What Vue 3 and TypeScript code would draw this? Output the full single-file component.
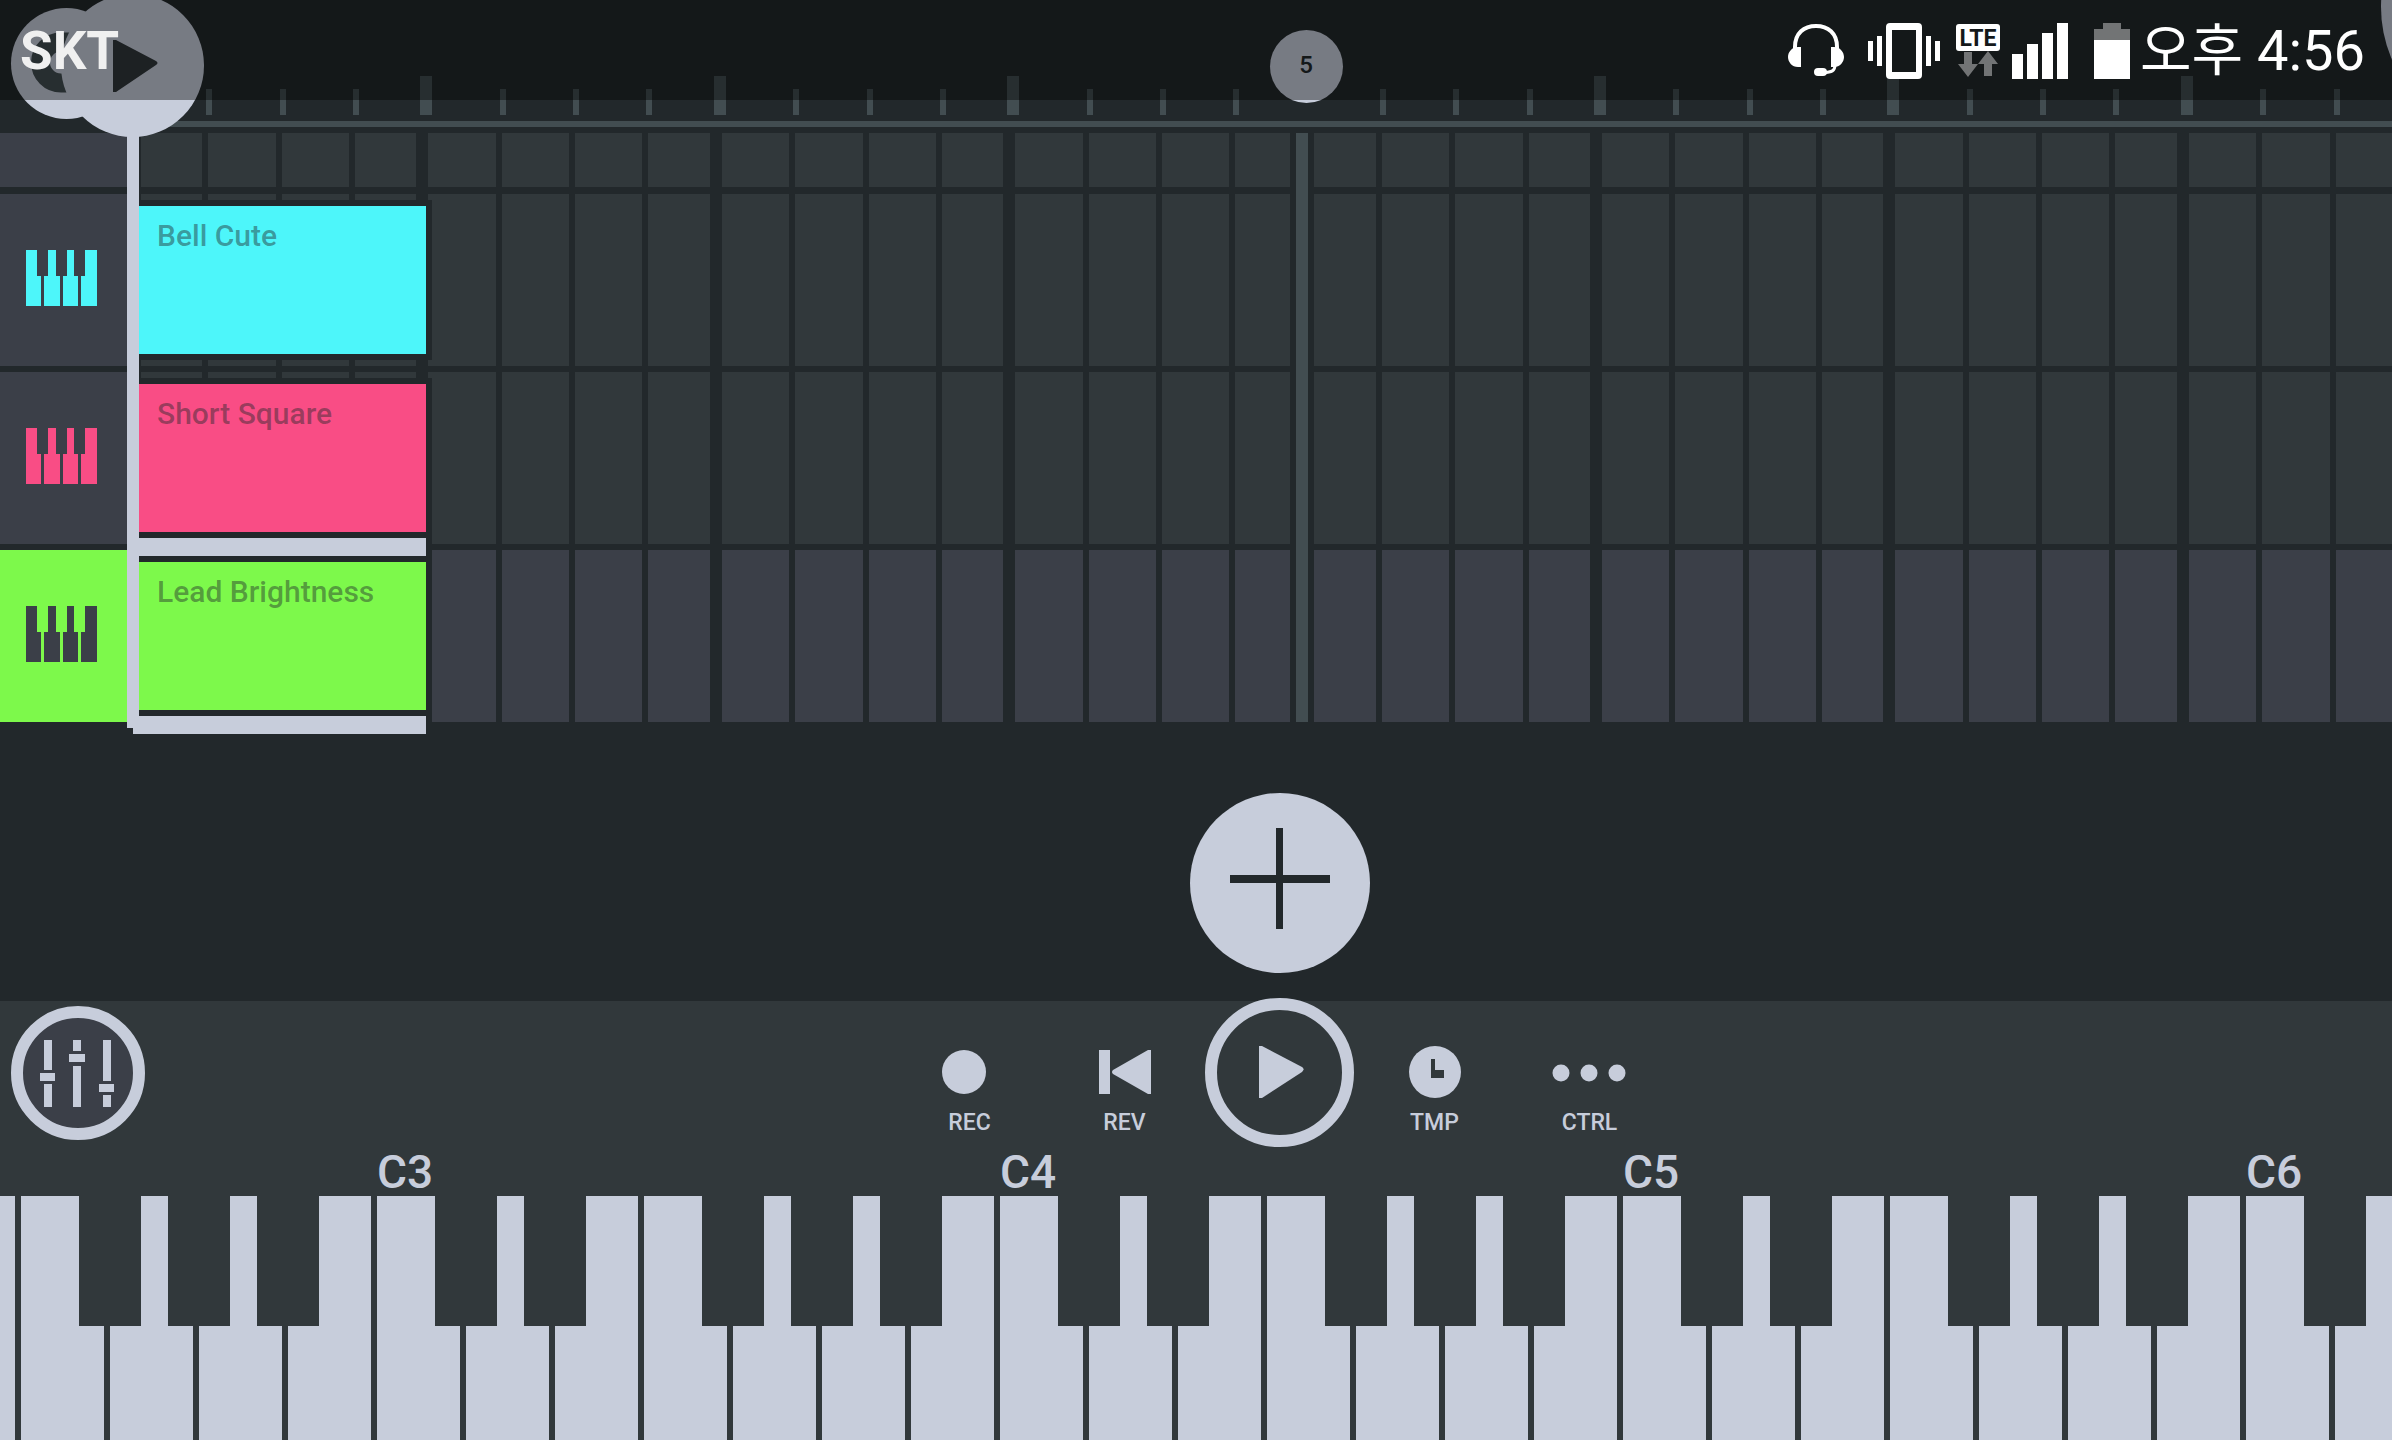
<script setup lang="ts">
interface Track {
  name: string
  color: string
  selected: boolean
}

const tracks: Track[] = [
  { name: 'Bell Cute', color: '#4df6fa', selected: false },
  { name: 'Short Square', color: '#f94d85', selected: false },
  { name: 'Lead Brightness', color: '#7df94b', selected: true },
]

const bars = [0, 1, 2, 3, 4, 5, 6, 7]
const beats = [0, 1, 2, 3]
const markerBar = 4

// White keys run from the E below the first full F upwards.
const scale = ['E', 'F', 'G', 'A', 'B', 'C', 'D']
const keys = Array.from({ length: 42 }, (_, i) => {
  const note = scale[i % 7]
  return { id: i, note, sharp: note !== 'E' && note !== 'B' }
})
const octaves = ['C3', 'C4', 'C5', 'C6']
</script>

<template>
  <div class="app">
    <header class="status">
      <span class="carrier">SKT</span>
      <div class="indicators">
        <svg width="70" height="56" viewBox="0 0 70 56" aria-hidden="true">
          <path d="M7 29V24C7 10 16 3 28 3s21 7 21 21v5" fill="none" stroke="#fff" stroke-width="4" />
          <path d="M13 24v20h-3C4 44 0 39 0 34s4-10 10-10zM43 24v20h3c6 0 10-5 10-10s-4-10-10-10z" fill="#fff" />
          <path d="M47 42c0 6-3 7-12 8" fill="none" stroke="#fff" stroke-width="3" />
          <rect x="26" y="45" width="13" height="8" rx="4" fill="#fff" />
        </svg>
        <svg width="78" height="56" viewBox="0 0 78 56" aria-hidden="true">
          <path fill="#fff" fill-rule="evenodd" d="M22 0h28q4 0 4 4v48q0 4-4 4H22q-4 0-4-4V4q0-4 4-4zM24 7v42h24V7z" />
          <path fill="#fff" d="M0 18h5v20H0zM9 13h5v30H9zM58 13h5v30h-5zM67 18h5v20h-5z" />
        </svg>
        <svg width="46" height="56" viewBox="0 0 46 56" aria-label="LTE">
          <rect y="1" width="44" height="27" rx="3" fill="#fff" />
          <text x="22" y="23" text-anchor="middle" class="lte">LTE</text>
          <path fill="#727475" d="M8 29h8v12h6L12 54 2 41h6zM28 53V41h-6l10-13 10 13h-6v12z" />
        </svg>
        <svg width="72" height="56" viewBox="0 0 72 56" aria-hidden="true">
          <path fill="#fff" d="M0 31h11v25H0zM15 21h11v35H15zM30 10h11v46H30zM45 0h11v56H45z" />
        </svg>
        <svg width="36" height="56" viewBox="0 0 36 56" aria-hidden="true">
          <path fill="#727475" d="M9 0h18v6h9v11H0V6h9z" />
          <path fill="#fff" d="M0 17h36v39H0z" />
        </svg>
        <time class="clock">오후 4:56</time>
      </div>
    </header>

    <main class="timeline">
      <div class="ruler">
        <div class="ticks">
          <div v-for="bar in bars" :key="bar" class="tick-bar">
            <span
              v-for="beat in beats"
              :key="beat"
              class="tick"
              :class="{ major: beat === 0, hidden: beat === 0 && bar % markerBar === 0 }"
            ></span>
          </div>
        </div>
      </div>

      <div class="row short">
        <div class="head"></div>
        <div class="lane">
          <div class="cells">
            <div v-for="bar in bars" :key="bar" class="bar">
              <span v-for="beat in beats" :key="beat" class="beat"></span>
            </div>
          </div>
        </div>
      </div>

      <div
        v-for="track in tracks"
        :key="track.name"
        class="row"
        :class="{ selected: track.selected }"
        :style="{ '--track': track.color }"
      >
        <button class="head" type="button" :aria-label="track.name">
          <svg width="71" height="56" viewBox="0 0 71 56" aria-hidden="true">
            <path
              fill="currentColor"
              d="M0 0h11v26h4v30H0zM22 0h8v26h4v30H18V26h4zM41 0h7v26h4v30H37V26h4zM59 0h12v56H55V26h4z"
            />
          </svg>
        </button>
        <div class="lane">
          <div class="cells">
            <div v-for="bar in bars" :key="bar" class="bar">
              <span v-for="beat in beats" :key="beat" class="beat"></span>
            </div>
          </div>
          <button class="clip" type="button"><span>{{ track.name }}</span></button>
        </div>
      </div>

      <div class="overlay">
        <div class="loop-line"></div>
        <div class="loop-flag">5</div>
      </div>
      <div class="playhead"></div>
      <button class="knob undo" type="button" aria-label="Undo">
        <svg width="111" height="111" viewBox="0 0 111 111" aria-hidden="true">
          <path d="M68 34H50a20 20 0 0 0 0 41h18" fill="none" stroke="#424d51" stroke-width="19" />
        </svg>
      </button>
      <button class="knob start" type="button" aria-label="Song position">
        <svg width="143" height="143" viewBox="0 0 143 143" aria-hidden="true">
          <path d="M52 46h3l40 21q3 2 0 4L55 98h-3z" fill="#31383b" />
        </svg>
      </button>
      <button class="knob menu" type="button" aria-label="Menu"></button>
    </main>

    <section class="add-area">
      <button class="add" type="button" aria-label="Add track">
        <svg width="180" height="180" viewBox="0 0 180 180" aria-hidden="true">
          <path fill="#22282b" d="M86 35h7v47h47v8H93v46h-7V90H40v-8h46z" />
        </svg>
      </button>
    </section>

    <section class="panel">
      <div class="toolbar">
        <button class="mixer" type="button" aria-label="Mixer">
          <svg width="110" height="110" viewBox="12 12 110 110" aria-hidden="true">
            <path
              fill="#c7cddb"
              d="M33 34h8v30h-8zM29 67h15v8H29zM33 78h8v23h-8zM62 34h8v11h-8zM58 48h16v8H58zM62 60h8v41h-8zM92 34h8v41h-8zM88 78h15v8H88zM92 89h8v12h-8z"
            />
          </svg>
        </button>
        <div class="transport">
          <button class="tool" type="button">
            <svg width="120" height="60" viewBox="0 0 120 60" aria-hidden="true">
              <circle cx="54" cy="29" r="22" />
            </svg>
            <span>REC</span>
          </button>
          <button class="tool" type="button">
            <svg width="120" height="60" viewBox="0 0 120 60" aria-hidden="true">
              <path d="M34 7h11v44H34zM86 7v44h-3L48 31q-2-2 0-4L83 7z" />
            </svg>
            <span>REV</span>
          </button>
          <button class="play" type="button" aria-label="Play">
            <svg width="125" height="125" viewBox="12 12 125 125" aria-hidden="true">
              <path d="M54 48h3l40 21q3 2 0 5l-40 26h-3z" />
            </svg>
          </button>
          <button class="tool" type="button">
            <svg width="120" height="60" viewBox="0 0 120 60" aria-hidden="true">
              <circle cx="60" cy="29" r="26" />
              <path d="M56 16h4v11h9v8H56z" fill="#31383b" />
            </svg>
            <span>TMP</span>
          </button>
          <button class="tool" type="button">
            <svg width="120" height="60" viewBox="0 0 120 60" aria-hidden="true">
              <circle cx="31" cy="30" r="8.5" />
              <circle cx="59" cy="30" r="8.5" />
              <circle cx="87" cy="30" r="8.5" />
            </svg>
            <span>CTRL</span>
          </button>
        </div>
      </div>
      <div class="octaves">
        <span v-for="octave in octaves" :key="octave">{{ octave }}</span>
      </div>
      <div class="keyboard">
        <div v-for="key in keys" :key="key.id" class="key">
          <button class="white" type="button" :aria-label="key.note"></button>
          <button v-if="key.sharp" class="black" type="button" :aria-label="key.note + ' sharp'"></button>
        </div>
      </div>
    </section>
  </div>
</template>

<style>
body {
  margin: 0;
  background: #22282b;
}
</style>

<style scoped>
.app {
  --bg: #22282b;
  --cell: #31383b;
  --slot: #3b3f48;
  --line: #424d51;
  --light: #c7cddb;
  position: relative;
  display: flex;
  flex-direction: column;
  min-height: 100vh;
  overflow: hidden;
  background: var(--bg);
  font-family: Roboto, "Noto Sans CJK KR", sans-serif;
}

button {
  padding: 0;
  border: 0;
  background: none;
  color: inherit;
  font: inherit;
  cursor: pointer;
}

svg {
  display: block;
}

.status {
  position: absolute;
  top: 0;
  left: 0;
  right: 0;
  z-index: 5;
  display: flex;
  justify-content: space-between;
  align-items: center;
  box-sizing: border-box;
  height: 100px;
  padding: 2px 27px 0 20px;
  background: rgba(0, 0, 0, 0.4);
}

.carrier {
  color: #f0f0f0;
  font-size: 53px;
  font-weight: 700;
  line-height: 64px;
}

.indicators {
  display: flex;
  align-items: center;
  gap: 10px;
}

.lte {
  fill: #14181a;
  font-size: 23px;
  font-weight: 700;
}

.clock {
  color: #fff;
  font-size: 56px;
  line-height: 64px;
}

.timeline {
  position: relative;
}

.ruler {
  height: 133px;
  margin-left: 127px;
  overflow: hidden;
}

.ticks {
  display: flex;
  height: 115px;
  margin-bottom: 6px;
  padding-left: 8px;
}

.ruler::after {
  content: "";
  display: block;
  height: 6px;
  background: var(--line);
}

.tick-bar,
.bar {
  flex: 0 0 13%;
  display: grid;
  grid-template-columns: repeat(4, 1fr);
}

.tick-bar {
  align-items: end;
}

.tick {
  width: 6px;
  height: 26px;
  margin-left: -2px;
  background: var(--line);
}

.tick.major {
  width: 12px;
  height: 39px;
  margin-left: -8px;
}

.tick.hidden {
  visibility: hidden;
}

.row {
  display: flex;
  height: 172px;
  margin-bottom: 6px;
}

.row.short {
  height: 54px;
  margin-bottom: 7px;
}

.row:nth-child(5) {
  margin-bottom: 0;
}

.head {
  display: flex;
  align-items: center;
  justify-content: center;
  flex: 0 0 127px;
  box-sizing: border-box;
  padding: 0 4px 4px 0;
  background: var(--slot);
  color: var(--track);
}

.selected .head {
  background: var(--track);
  color: var(--slot);
}

.lane {
  position: relative;
  isolation: isolate;
  flex: 1;
  min-width: 0;
  margin-left: 8px;
}

.cells {
  position: relative;
  z-index: -2;
  display: flex;
  height: 100%;
  overflow: hidden;
}

.beat {
  margin-right: 6px;
  background: var(--cell);
}

.beat:last-child {
  margin-right: 12px;
}

.bar:first-child .beat:first-child {
  margin-left: 6px;
}

.selected .beat {
  background: var(--slot);
}

.clip {
  position: absolute;
  top: 6px;
  bottom: 6px;
  left: -2px;
  width: calc(13% + 6px);
  border: 6px solid var(--bg);
  background: var(--track);
  text-align: left;
  color: rgba(34, 40, 43, 0.45);
  font-size: 30px;
  font-weight: 500;
  line-height: 36px;
}

.clip span {
  display: block;
  height: 132px;
  padding: 8px 18px 0;
}

.selected .clip::before {
  content: "";
  position: absolute;
  z-index: -1;
  top: -24px;
  bottom: -24px;
  left: -6px;
  right: -6px;
  border-right: 6px solid var(--bg);
  background: var(--light);
}

.overlay {
  position: absolute;
  top: 0;
  bottom: 0;
  left: 135px;
  right: 0;
}

.loop-line {
  position: absolute;
  top: 133px;
  bottom: 0;
  left: calc(52% - 19px);
  width: 12px;
  border: solid var(--bg);
  border-width: 0 6px;
  background: var(--line);
}

.loop-flag {
  position: absolute;
  top: 30px;
  left: calc(52% - 39px);
  width: 73px;
  height: 73px;
  border-radius: 50%;
  background: var(--light);
  color: var(--bg);
  text-align: center;
  font-size: 24px;
  font-weight: 500;
  line-height: 70px;
}

.playhead {
  position: absolute;
  top: 100px;
  bottom: -6px;
  left: 127px;
  width: 12px;
  background: var(--light);
}

.knob {
  position: absolute;
  border-radius: 50%;
  background: var(--light);
}

.undo {
  top: 8px;
  left: 11px;
  width: 111px;
  height: 111px;
}

.start {
  top: -6px;
  left: 61px;
  width: 143px;
  height: 143px;
}

.menu {
  top: -125px;
  right: -253px;
  width: 264px;
  height: 264px;
}

.add-area {
  display: flex;
  justify-content: center;
  padding: 71px 0 28px 168px;
}

.add {
  width: 180px;
  height: 180px;
  border-radius: 50%;
  background: var(--light);
}

.panel {
  flex: 1;
  display: flex;
  flex-direction: column;
  background: var(--cell);
  color: var(--light);
}

.toolbar {
  display: flex;
  align-items: center;
  height: 143px;
  padding-left: 11px;
}

.mixer {
  box-sizing: border-box;
  width: 134px;
  height: 134px;
  border: 12px solid var(--light);
  border-radius: 50%;
  background: var(--slot);
}

.transport {
  flex: 1;
  display: flex;
  justify-content: center;
  align-items: center;
  margin-left: 22px;
}

.tool {
  display: flex;
  flex-direction: column;
  align-items: center;
  gap: 6px;
  box-sizing: border-box;
  width: 155px;
  height: 143px;
  padding-top: 42px;
  font-size: 23px;
  font-weight: 500;
  line-height: 28px;
}

.transport svg {
  fill: var(--light);
}

.play {
  box-sizing: border-box;
  width: 149px;
  height: 149px;
  margin: 0 3px;
  border: 12px solid var(--light);
  border-radius: 50%;
}

.octaves {
  display: flex;
  gap: 534px;
  height: 52px;
  padding-left: 377px;
  font-size: 46px;
  font-weight: 500;
  line-height: 56px;
}

.octaves span {
  flex: 0 0 89px;
}

.keyboard {
  flex: 1;
  display: flex;
  min-height: 244px;
  margin-left: -68px;
  overflow: hidden;
}

.key {
  position: relative;
  display: flex;
  flex: 0 0 89px;
}

.white {
  flex: 1;
  margin-right: 6px;
  background: var(--light);
}

.black {
  position: absolute;
  z-index: 1;
  top: 0;
  left: 58px;
  width: 62px;
  height: 130px;
  background: var(--cell);
}
</style>
